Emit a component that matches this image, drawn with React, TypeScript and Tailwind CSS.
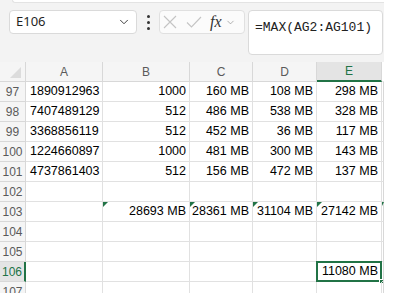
import React from 'react';
import { ChevronDown } from 'lucide-react';

type Row = {
  n: number;
  cells: string[];
  flags?: boolean[];
};

const rows: Row[] = [
  { n: 97, cells: ['1890912963', '1000', '160 MB', '108 MB', '298 MB'] },
  { n: 98, cells: ['7407489129', '512', '486 MB', '538 MB', '328 MB'] },
  { n: 99, cells: ['3368856119', '512', '452 MB', '36 MB', '117 MB'] },
  { n: 100, cells: ['1224660897', '1000', '481 MB', '300 MB', '143 MB'] },
  { n: 101, cells: ['4737861403', '512', '156 MB', '472 MB', '137 MB'] },
  { n: 102, cells: ['', '', '', '', ''] },
  {
    n: 103,
    cells: ['', '28693 MB', '28361 MB', '31104 MB', '27142 MB'],
    flags: [false, true, true, true, true, true],
  },
  { n: 104, cells: ['', '', '', '', ''] },
  { n: 105, cells: ['', '', '', '', ''] },
  { n: 106, cells: ['', '', '', '', '11080 MB'] },
  { n: 107, cells: ['', '', '', '', ''] },
];

const cols = ['A', 'B', 'C', 'D', 'E'];
const gridCols = 'grid grid-cols-[26px_77px_87px_63px_64px_65px_2px]';

function Triangle() {
  return (
    <span className="absolute left-0 top-0 w-0 h-0 border-t-[5px] border-r-[5px] border-t-[#217346] border-r-transparent" />
  );
}

export default function App() {
  return (
    <div
      className="w-[396px] h-[293px] overflow-hidden flex bg-white text-black"
      style={{ fontFamily: '"Liberation Sans", Arial, sans-serif' }}
    >
      <div className="w-[384px] flex flex-col">
        {/* Formula bar area */}
        <div className="h-[62px] bg-[#f3f3f3] relative shrink-0">
          <div className="absolute left-[12px] right-0 top-0 h-[3px] bg-white rounded-bl-[4px] border-b border-l border-[#e3e3e3]" />
          <div className="flex items-start pt-[10px] pl-[9px]">
            <div className="w-[128px] h-[24px] bg-white rounded-[4px] border border-[#dadada] flex items-center justify-between pl-[6px] pr-[5px]">
              <span className="text-[13px] text-[#1f1f1f]" style={{ fontFamily: '"Noto Sans", sans-serif' }}>
                E106
              </span>
              <ChevronDown size={14} strokeWidth={1.6} className="text-[#333]" />
            </div>
            <div className="w-[22px] h-[24px] flex flex-col items-center justify-center gap-[3px]">
              <span className="w-[3px] h-[3px] rounded-full bg-[#333]" />
              <span className="w-[3px] h-[3px] rounded-full bg-[#333]" />
              <span className="w-[3px] h-[3px] rounded-full bg-[#333]" />
            </div>
            <div className="w-[86px] h-[24px] bg-[#fbfbfb] rounded-[4px] border border-[#e0e0e0] flex items-center pl-[3px]">
              <svg width="14" height="14" viewBox="0 0 14 14" fill="none" stroke="#c4c4c4" strokeWidth="1.1">
                <path d="M1 1L13 13M13 1L1 13" />
              </svg>
              <svg width="16" height="12" viewBox="0 0 16 12" fill="none" stroke="#c4c4c4" strokeWidth="1.1" className="ml-[9px]">
                <path d="M1 6.5L5.5 11L15 1" />
              </svg>
              <span
                className="ml-[8px] text-[16px] italic text-[#333] leading-none"
                style={{ fontFamily: '"Liberation Serif", "Times New Roman", serif' }}
              >
                fx
              </span>
              <ChevronDown size={11} strokeWidth={1.4} className="text-[#888] ml-[3px]" />
            </div>
            <div className="ml-[3px] w-[135px] h-[45px] bg-white rounded-[4px] border border-[#dadada] pl-[6px] pt-[3px]">
              <span
                className="text-[13px] leading-[18px] text-[#222] whitespace-nowrap"
                style={{ fontFamily: '"Liberation Mono", "Courier New", monospace' }}
              >
                =MAX(AG2:AG101)
              </span>
            </div>
          </div>
        </div>

        {/* Column header */}
        <div className={`${gridCols} h-[20px] shrink-0 text-[12px] text-[#5a5a5a]`}>
          <div className="relative bg-[#f5f5f5] border-r border-b border-[#d8d8d8]">
            <span className="absolute right-[4px] bottom-[3px] w-0 h-0 border-b-[11px] border-l-[11px] border-b-[#dcdcdc] border-l-transparent" />
          </div>
          {cols.map((c) => (
            <div
              key={c}
              className={
                c === 'E'
                  ? 'bg-[#e4e4e4] border-r border-[#d8d8d8] border-b-2 border-b-[#217346] text-[#217346] flex items-center justify-center'
                  : 'bg-[#f5f5f5] border-r border-b border-[#d8d8d8] flex items-center justify-center'
              }
            >
              {c}
            </div>
          ))}
          <div className="bg-white border-b border-[#e6e6e6]" />
        </div>

        {/* Rows */}
        {rows.map((r) => {
          const sel = r.n === 106;
          return (
            <div key={r.n} className={`${gridCols} h-[20px] shrink-0`}>
              <div
                className={
                  sel
                    ? 'bg-[#e4e4e4] border-b border-[#d8d8d8] border-r-2 border-r-[#217346] text-[#217346] text-[12px] flex items-center justify-center'
                    : 'bg-[#f5f5f5] border-r border-b border-[#d8d8d8] text-[12px] text-[#5a5a5a] flex items-center justify-center'
                }
              >
                {r.n}
              </div>
              {r.cells.map((v, i) => {
                const isSel = sel && i === 4;
                return (
                  <div
                    key={i}
                    className={`relative border-r border-b border-[#e1e1e1] flex items-center text-[12.5px] whitespace-nowrap ${
                      i === 0 ? 'justify-start pl-[4px]' : 'justify-end pr-[3px]'
                    }`}
                  >
                    {r.flags && r.flags[i] && <Triangle />}
                    {v}
                    {isSel && (
                      <>
                        <span className="absolute left-[-1px] top-[-1px] right-[-1px] bottom-[-1px] border-2 border-[#217346]" />
                        <span className="absolute right-[-3px] bottom-[-3px] w-[5px] h-[5px] bg-[#217346] border border-white" />
                      </>
                    )}
                  </div>
                );
              })}
              <div className="relative border-b border-[#e1e1e1] border-r border-r-[#d8d8d8]">
                {r.flags && r.flags[5] && (
                  <span className="absolute left-0 top-0 w-0 h-0 border-t-[4px] border-r-[2px] border-t-[#217346] border-r-transparent" />
                )}
              </div>
            </div>
          );
        })}
      </div>
      <div className="flex-1 bg-white" />
    </div>
  );
}
